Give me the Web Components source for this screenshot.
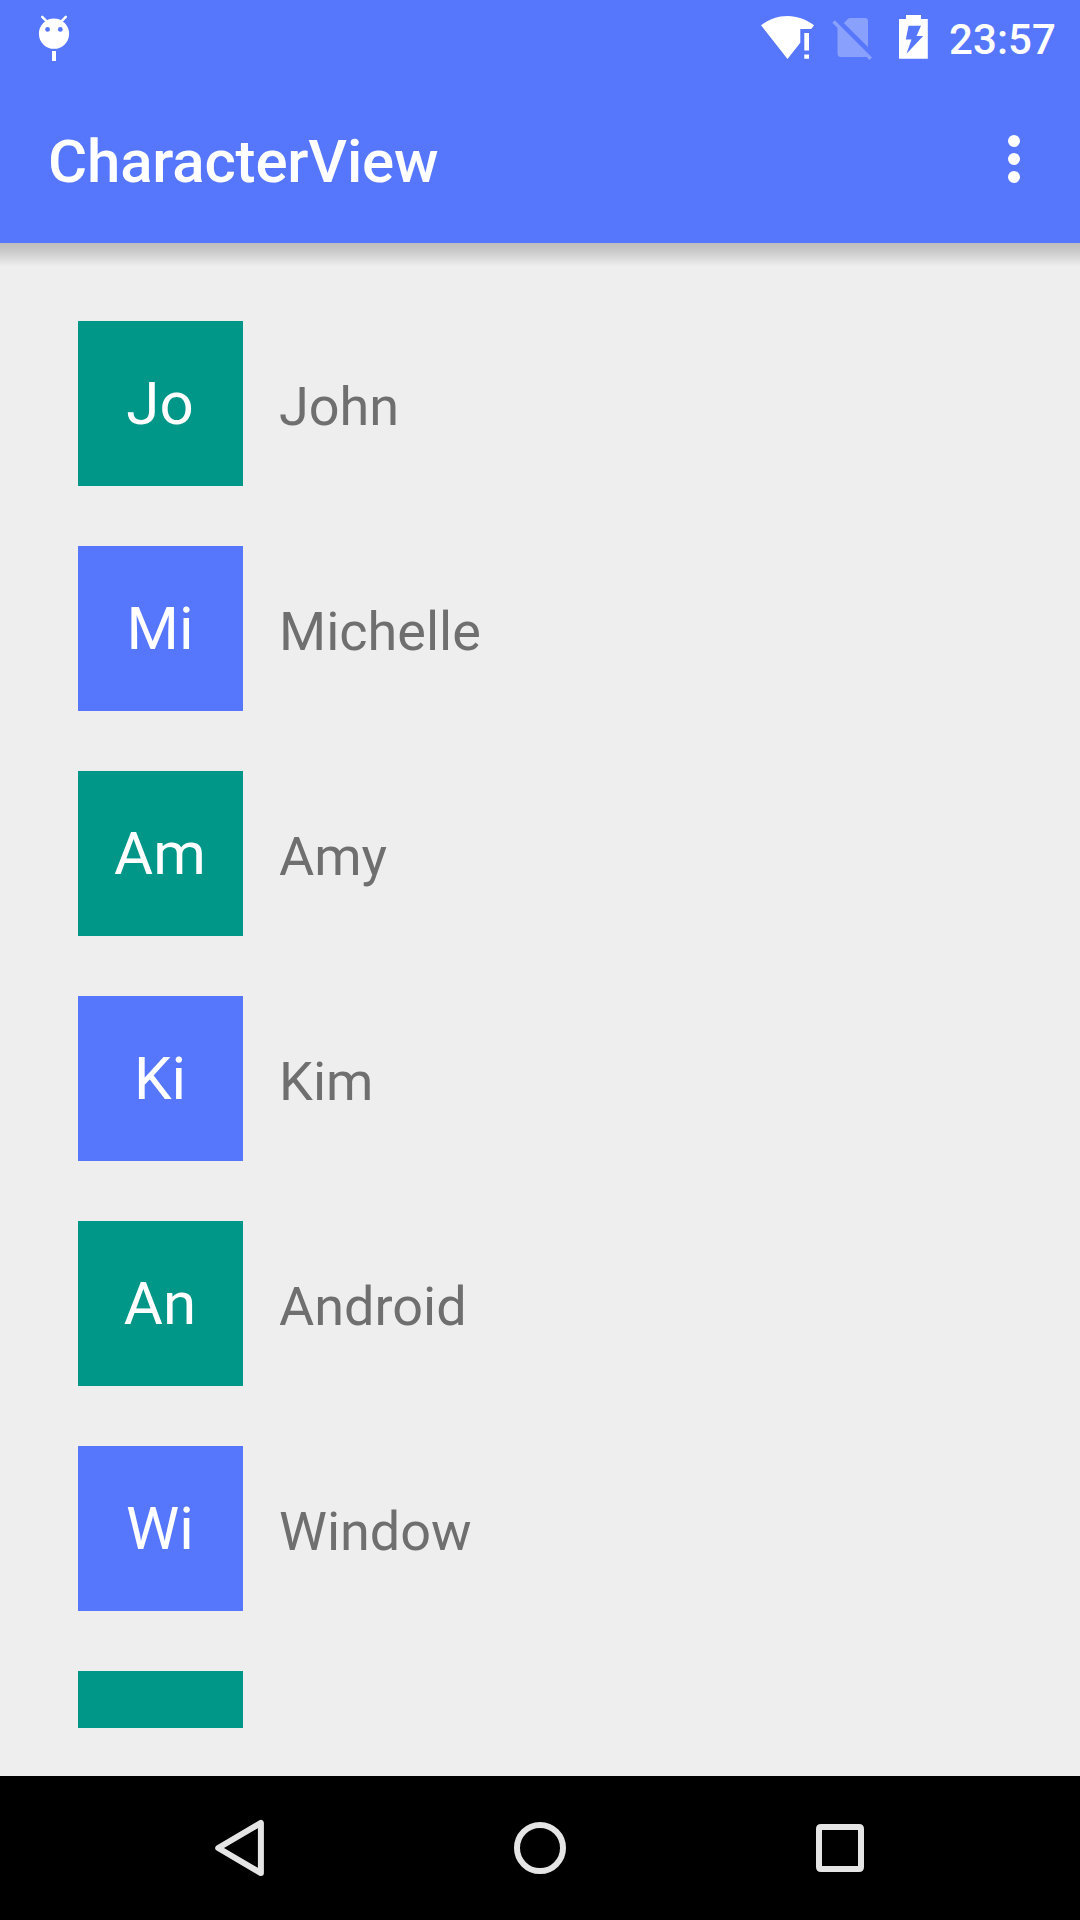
<!DOCTYPE html>
<html lang="en">
<head>
<meta charset="utf-8">
<title>CharacterView</title>
<style>
html,body{margin:0;padding:0}
body{width:1080px;height:1920px;overflow:hidden;font-family:Roboto,"Noto Sans",sans-serif}
</style>
</head>
<body>
<phone-screen>
  <status-bar slot="top">23:57</status-bar>
  <app-toolbar slot="top">CharacterView</app-toolbar>
  <contact-row initials="Jo" tone="teal">John</contact-row>
  <contact-row initials="Mi" tone="blue">Michelle</contact-row>
  <contact-row initials="Am" tone="teal">Amy</contact-row>
  <contact-row initials="Ki" tone="blue">Kim</contact-row>
  <contact-row initials="An" tone="teal">Android</contact-row>
  <contact-row initials="Wi" tone="blue">Window</contact-row>
  <contact-row initials="" tone="teal"></contact-row>
  <nav-bar slot="bottom"></nav-bar>
</phone-screen>
<script>
class PhoneScreen extends HTMLElement {
  constructor() {
    super();
    this.attachShadow({mode: 'open'}).innerHTML = `
<style>
:host{display:flex;flex-direction:column;width:1080px;height:1920px;background:#eee;
  --primary:#5677fc;--accent:#009688}
header,footer{flex:none}
main{flex:1;min-height:0;box-sizing:border-box;padding:0 48px 48px;display:flex;flex-direction:column}
.shadow{flex:none;height:24px;margin:0 -48px 24px;
  background:linear-gradient(#bebebe 0,#c2c2c2 16%,#cbcbcb 36%,#d9d9d9 60%,#e5e5e5 80%,#ececec 94%,#eee 100%)}
.list{flex:1;min-height:0;overflow:hidden}
</style>
<header><slot name="top"></slot></header>
<main><div class="shadow"></div><div class="list"><slot></slot></div></main>
<footer><slot name="bottom"></slot></footer>`;
  }
}
class StatusBar extends HTMLElement {
  constructor() {
    super();
    this.attachShadow({mode: 'open'}).innerHTML = `
<style>
:host{display:flex;align-items:center;justify-content:space-between;box-sizing:border-box;height:75px;
  padding:0 24px 0 36px;background:var(--primary);color:#fff}
svg{display:block;height:75px;fill:currentColor}
.tray{display:flex;align-items:center}
.wifi{margin-right:15px}.sim{margin-right:24px}.battery{margin-right:20px}
.clock{width:107px;font-size:42px;line-height:49px;font-weight:500;letter-spacing:.1px;padding-top:4px}
</style>
<svg width="36" viewBox="36 0 36 75"><circle cx="54" cy="33.7" r="15.1"/>
<path d="M42.2 16.8l4.200 4.400M65.800 16.800l-4.200 4.400" stroke="#fff" stroke-width="2.4" stroke-linecap="round"/>
<path d="M52 51h4v10h-4z"/><g fill="#5677fc"><circle cx="47.6" cy="29.4" r="2.4"/><circle cx="60.3" cy="29.4" r="2.4"/></g></svg>
<div class="tray">
<svg class="wifi" width="57" viewBox="759 0 57 75"><path d="M787.5 59L761 25.3C768.500 19.500 777.500 16 787.500 16S806.500 19.500 814 25.300L811.300 29H800.300V42.700z"/><path d="M804.300 33h4.700v17.500h-4.700zM804.300 54.500h4.700v4.300h-4.700z"/></svg>
<svg class="sim" width="42" viewBox="831 0 42 75"><path fill="#89a0fd" d="M843.800 23l4.300-4.300q.7-.7 1.700-.7H865q3 0 3 3v26zM832.300 22.700l2.500-2.400L872 57.500l-2.500 2.500-3.200-3.200q-.6.200-1.300.2h-24q-3.500 0-3.500-3.500V28z"/></svg>
<svg class="battery" width="32" viewBox="897 0 32 75"><path fill-rule="evenodd" d="M906 15h15v4h6.800v39.800H899V19h7zM908.600 25.700L905.800 39.500H911.500L906.500 53.800 923.200 36H916.500L921 25.700z"/></svg>
<span class="clock"><slot></slot></span>
</div>`;
  }
}
class AppToolbar extends HTMLElement {
  constructor() {
    super();
    this.attachShadow({mode: 'open'}).innerHTML = `
<style>
:host{display:flex;align-items:center;justify-content:space-between;box-sizing:border-box;height:168px;
  padding:0 60px 0 48px;background:var(--primary);color:#fff}
.title{font-size:60px;line-height:71px;font-weight:500;letter-spacing:-.18px;padding-top:5px}
svg{display:block;fill:currentColor}
</style>
<span class="title"><slot></slot></span>
<svg width="12" height="48"><circle cx="6" cy="6" r="6"/><circle cx="6" cy="24" r="6"/><circle cx="6" cy="42" r="6"/></svg>`;
  }
}
class ContactRow extends HTMLElement {
  constructor() {
    super();
    this.attachShadow({mode: 'open'}).innerHTML = `
<style>
:host{display:flex;align-items:center;gap:36px;box-sizing:border-box;height:225px;padding:30px}
.avatar{display:flex;align-items:center;justify-content:center;flex:none;box-sizing:border-box;width:165px;height:165px;
  padding-right:1px;background:var(--accent);color:#fff;font-size:60px;line-height:71px}
:host([tone=blue]) .avatar{background:var(--primary)}
.name{padding-top:6px;font-size:54px;line-height:63px;color:#6f6f6f}
</style>
<div class="avatar"></div><span class="name"><slot></slot></span>`;
  }
  connectedCallback() {
    this.shadowRoot.querySelector('.avatar').textContent = this.getAttribute('initials');
  }
}
class NavBar extends HTMLElement {
  constructor() {
    super();
    this.attachShadow({mode: 'open'}).innerHTML = `
<style>
:host{display:flex;align-items:center;justify-content:space-around;box-sizing:border-box;height:144px;padding:0 90px;background:#000}
svg{display:block;fill:none;stroke:#e5e5e5;stroke-width:6}
</style>
<svg width="60" height="60"><path stroke-linejoin="round" d="M8.200 30L50.900 4.900V55.100z"/></svg>
<svg width="60" height="60"><circle cx="30" cy="30" r="23"/></svg>
<svg width="60" height="60"><path fill="#e5e5e5" fill-rule="evenodd" stroke="none" d="M11 6h38q5 0 5 5v38q0 5-5 5H11q-5 0-5-5V11q0-5 5-5zM12 12v36h36V12z"/></svg>`;
  }
}
customElements.define('phone-screen', PhoneScreen);
customElements.define('status-bar', StatusBar);
customElements.define('app-toolbar', AppToolbar);
customElements.define('contact-row', ContactRow);
customElements.define('nav-bar', NavBar);
</script>
</body>
</html>
